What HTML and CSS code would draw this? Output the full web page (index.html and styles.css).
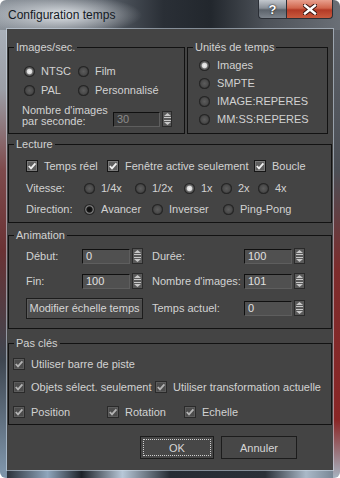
FILE: index.html
```html
<!DOCTYPE html>
<html lang="fr">
<head>
    <meta charset="UTF-8">
    <title>Configuration temps</title>
    <link rel="stylesheet" href="styles.css">
</head>
<body>

<div class="window">
    <div class="titlebar">
        <span class="title">Configuration temps</span>
        <div class="caption-btns">
            <span class="cap-btn help">?</span>
            <span class="cap-btn close">
                <svg width="14" height="11" viewBox="0 0 14 11">
                    <path d="M2 1.5 L12 9.5 M12 1.5 L2 9.5" stroke="#3a1510" stroke-width="4.4" stroke-linecap="square"/>
                    <path d="M2 1.5 L12 9.5 M12 1.5 L2 9.5" stroke="#ffffff" stroke-width="2.4" stroke-linecap="square"/>
                </svg>
            </span>
        </div>
    </div>

    <div class="client">
        <div class="top-row">
            <fieldset class="group fps">
                <legend>Images/sec.</legend>
                <div class="fps-body">
                    <div class="radio-grid">
                        <label class="opt"><span class="radio on"></span>NTSC</label>
                        <label class="opt"><span class="radio"></span>Film</label>
                        <label class="opt"><span class="radio"></span>PAL</label>
                        <label class="opt"><span class="radio"></span>Personnalisé</label>
                    </div>
                    <div class="fps-row">
                        <span class="fps-label">Nombre d'images<br>par seconde:</span>
                        <span class="field off">30</span>
                        <span class="spin">
                            <span class="arr"><svg width="7" height="5" viewBox="0 0 7 5"><path d="M3.5 0 L7 3 L0 3 Z" fill="#c8c8c8"/><rect x="0" y="4" width="7" height="1" fill="#c8c8c8"/></svg></span>
                            <span class="arr"><svg width="7" height="5" viewBox="0 0 7 5"><rect x="0" y="0" width="7" height="1" fill="#c8c8c8"/><path d="M0 2 L7 2 L3.5 5 Z" fill="#c8c8c8"/></svg></span>
                        </span>
                    </div>
                </div>
            </fieldset>

            <fieldset class="group units">
                <legend>Unités de temps</legend>
                <div class="units-body">
                    <label class="opt"><span class="radio on"></span>Images</label>
                    <label class="opt"><span class="radio"></span>SMPTE</label>
                    <label class="opt"><span class="radio"></span>IMAGE:REPERES</label>
                    <label class="opt"><span class="radio"></span>MM:SS:REPERES</label>
                </div>
            </fieldset>
        </div>

        <fieldset class="group playback">
            <legend>Lecture</legend>
            <div class="playback-body">
                <div class="row">
                    <label class="opt w81"><span class="cb"><svg width="10" height="10" viewBox="0 0 10 10"><path d="M1.8 5 L4 7.4 L8.4 2.4" fill="none" stroke="#f2f2f2" stroke-width="1.8"/></svg></span>Temps réel</label>
                    <label class="opt w147"><span class="cb"><svg width="10" height="10" viewBox="0 0 10 10"><path d="M1.8 5 L4 7.4 L8.4 2.4" fill="none" stroke="#f2f2f2" stroke-width="1.8"/></svg></span>Fenêtre active seulement</label>
                    <label class="opt"><span class="cb"><svg width="10" height="10" viewBox="0 0 10 10"><path d="M1.8 5 L4 7.4 L8.4 2.4" fill="none" stroke="#f2f2f2" stroke-width="1.8"/></svg></span>Boucle</label>
                </div>
                <div class="row speed">
                    <span class="row-label">Vitesse:</span>
                    <label class="opt w51"><span class="radio"></span>1/4x</label>
                    <label class="opt w49"><span class="radio"></span>1/2x</label>
                    <label class="opt w37"><span class="radio on"></span>1x</label>
                    <label class="opt w37"><span class="radio"></span>2x</label>
                    <label class="opt"><span class="radio"></span>4x</label>
                </div>
                <div class="row direction">
                    <span class="row-label">Direction:</span>
                    <label class="opt w68"><span class="radio dark"></span>Avancer</label>
                    <label class="opt w71"><span class="radio"></span>Inverser</label>
                    <label class="opt"><span class="radio"></span>Ping-Pong</label>
                </div>
            </div>
        </fieldset>

        <fieldset class="group animation">
            <legend>Animation</legend>
            <div class="anim-body">
                <div class="anim-row">
                    <span class="lbl1">Début:</span>
                    <span class="field">0</span>
                    <span class="spin">
                        <span class="arr"><svg width="7" height="5" viewBox="0 0 7 5"><path d="M3.5 0 L7 3 L0 3 Z" fill="#c8c8c8"/><rect x="0" y="4" width="7" height="1" fill="#c8c8c8"/></svg></span>
                        <span class="arr"><svg width="7" height="5" viewBox="0 0 7 5"><rect x="0" y="0" width="7" height="1" fill="#c8c8c8"/><path d="M0 2 L7 2 L3.5 5 Z" fill="#c8c8c8"/></svg></span>
                    </span>
                    <span class="lbl2">Durée:</span>
                    <span class="field">100</span>
                    <span class="spin">
                        <span class="arr"><svg width="7" height="5" viewBox="0 0 7 5"><path d="M3.5 0 L7 3 L0 3 Z" fill="#c8c8c8"/><rect x="0" y="4" width="7" height="1" fill="#c8c8c8"/></svg></span>
                        <span class="arr"><svg width="7" height="5" viewBox="0 0 7 5"><rect x="0" y="0" width="7" height="1" fill="#c8c8c8"/><path d="M0 2 L7 2 L3.5 5 Z" fill="#c8c8c8"/></svg></span>
                    </span>
                </div>
                <div class="anim-row second">
                    <span class="lbl1">Fin:</span>
                    <span class="field">100</span>
                    <span class="spin">
                        <span class="arr"><svg width="7" height="5" viewBox="0 0 7 5"><path d="M3.5 0 L7 3 L0 3 Z" fill="#c8c8c8"/><rect x="0" y="4" width="7" height="1" fill="#c8c8c8"/></svg></span>
                        <span class="arr"><svg width="7" height="5" viewBox="0 0 7 5"><rect x="0" y="0" width="7" height="1" fill="#c8c8c8"/><path d="M0 2 L7 2 L3.5 5 Z" fill="#c8c8c8"/></svg></span>
                    </span>
                    <span class="lbl2">Nombre d'images:</span>
                    <span class="field">101</span>
                    <span class="spin">
                        <span class="arr"><svg width="7" height="5" viewBox="0 0 7 5"><path d="M3.5 0 L7 3 L0 3 Z" fill="#c8c8c8"/><rect x="0" y="4" width="7" height="1" fill="#c8c8c8"/></svg></span>
                        <span class="arr"><svg width="7" height="5" viewBox="0 0 7 5"><rect x="0" y="0" width="7" height="1" fill="#c8c8c8"/><path d="M0 2 L7 2 L3.5 5 Z" fill="#c8c8c8"/></svg></span>
                    </span>
                </div>
                <div class="anim-row third">
                    <button class="btn scale-btn">Modifier échelle temps</button>
                    <span class="lbl2">Temps actuel:</span>
                    <span class="field">0</span>
                    <span class="spin">
                        <span class="arr"><svg width="7" height="5" viewBox="0 0 7 5"><path d="M3.5 0 L7 3 L0 3 Z" fill="#c8c8c8"/><rect x="0" y="4" width="7" height="1" fill="#c8c8c8"/></svg></span>
                        <span class="arr"><svg width="7" height="5" viewBox="0 0 7 5"><rect x="0" y="0" width="7" height="1" fill="#c8c8c8"/><path d="M0 2 L7 2 L3.5 5 Z" fill="#c8c8c8"/></svg></span>
                    </span>
                </div>
            </div>
        </fieldset>

        <fieldset class="group keys">
            <legend>Pas clés</legend>
            <div class="keys-body">
                <div class="row">
                    <label class="opt"><span class="cb dim"><svg width="10" height="10" viewBox="0 0 10 10"><path d="M1.8 5 L4 7.4 L8.4 2.4" fill="none" stroke="#b4b4b4" stroke-width="1.8"/></svg></span>Utiliser barre de piste</label>
                </div>
                <div class="row keys2">
                    <label class="opt w142"><span class="cb dim"><svg width="10" height="10" viewBox="0 0 10 10"><path d="M1.8 5 L4 7.4 L8.4 2.4" fill="none" stroke="#b4b4b4" stroke-width="1.8"/></svg></span>Objets sélect. seulement</label>
                    <label class="opt"><span class="cb dim"><svg width="10" height="10" viewBox="0 0 10 10"><path d="M1.8 5 L4 7.4 L8.4 2.4" fill="none" stroke="#b4b4b4" stroke-width="1.8"/></svg></span>Utiliser transformation actuelle</label>
                </div>
                <div class="row keys3">
                    <label class="opt w94"><span class="cb dim"><svg width="10" height="10" viewBox="0 0 10 10"><path d="M1.8 5 L4 7.4 L8.4 2.4" fill="none" stroke="#b4b4b4" stroke-width="1.8"/></svg></span>Position</label>
                    <label class="opt w77"><span class="cb dim"><svg width="10" height="10" viewBox="0 0 10 10"><path d="M1.8 5 L4 7.4 L8.4 2.4" fill="none" stroke="#b4b4b4" stroke-width="1.8"/></svg></span>Rotation</label>
                    <label class="opt"><span class="cb dim"><svg width="10" height="10" viewBox="0 0 10 10"><path d="M1.8 5 L4 7.4 L8.4 2.4" fill="none" stroke="#b4b4b4" stroke-width="1.8"/></svg></span>Echelle</label>
                </div>
            </div>
        </fieldset>

        <div class="actions">
            <button class="btn dlg-btn ok"><span class="focus">OK</span></button>
            <button class="btn dlg-btn">Annuler</button>
        </div>
    </div>
</div>

</body>
</html>
```

FILE: styles.css
```css
* {
    box-sizing: border-box;
}

body {
    margin: 0;
    background-color: #ffffff;
    font-family: "Liberation Sans", Arial, sans-serif;
    font-size: 11px;
}

.window {
    width: 340px;
    height: 478px;
    border-radius: 6px;
    overflow: hidden;
    display: flex;
    flex-direction: column;
    background:
        radial-gradient(ellipse 80px 20px at 62px 15px, rgba(230, 234, 238, 0.95), rgba(230, 234, 238, 0) 100%),
        linear-gradient(to right, #8c939b 0, #5a616a 30%, #2a2f36 48%, #22272d 62%, #4d5259 78%, #6a6f76 100%) top / 100% 30px no-repeat,
        linear-gradient(to bottom, #a9b0b9 30px, #9b9ea6 90px, #7e4a4c 170px, #6a3234 250px, #3e4650 360px, #7d93a8 470px) left / 7px 100% no-repeat,
        linear-gradient(to bottom, #5d6168 30px, #4b4f56 170px, #7d2c2c 270px, #8a2626 420px, #a6b3c0 478px) right / 7px 100% no-repeat,
        linear-gradient(to right, #1a1e24 0, #8fa6bc 14%, #1d2229 24%, #b8c8d8 36%, #262c34 50%, #2a3038 78%, #aab9c8 90%, #6c7a88 100%) bottom / 100% 8px no-repeat,
        #3a3f46;
}

.titlebar {
    height: 29px;
    display: flex;
    justify-content: space-between;
    align-items: flex-start;
    padding: 0 7px 0 8px;
}

.title {
    margin-top: 8px;
    font-family: "Liberation Sans", Arial, sans-serif;
    font-size: 12px;
    color: #141a24;
}

.caption-btns {
    display: flex;
}

.cap-btn {
    height: 19px;
    display: flex;
    align-items: center;
    justify-content: center;
    border: 1px solid #2b2f36;
    border-top: none;
}

.help {
    width: 28px;
    border-radius: 0 0 0 4px;
    border-right: none;
    background: linear-gradient(to bottom, #c3c8ce 0, #8a9098 45%, #5c636b 55%, #7d848c 100%);
    color: #ffffff;
    font-weight: bold;
    font-size: 13px;
    text-shadow: 0 0 2px #222, 0 0 1px #222;
}

.close {
    width: 47px;
    border-radius: 0 0 4px 0;
    background: linear-gradient(to bottom, #e8a08e 0, #d0654c 45%, #b33a26 55%, #c95a3e 100%);
}

.client {
    height: 441px;
    margin: 0 7px 8px 7px;
    background-color: #444444;
    padding: 0 1px;
    color: #d2d2d2;
    box-shadow: 0 0 0 1px rgba(210, 222, 235, 0.55);
}

.group {
    margin: 0;
    padding: 0;
    border: 1px solid #121212;
    min-width: 0;
}

.group legend {
    margin-left: 5px;
    padding: 0 2px;
    line-height: 13px;
    color: #d2d2d2;
}

.top-row {
    display: flex;
    margin-top: 12px;
}

.fps {
    width: 177px;
    height: 93px;
}

.units {
    width: 141px;
    height: 93px;
    margin-left: 2px;
}

.opt {
    display: flex;
    align-items: center;
    gap: 6px;
    height: 14px;
    white-space: nowrap;
}

.radio {
    width: 11px;
    height: 11px;
    border-radius: 50%;
    flex-shrink: 0;
    background: radial-gradient(circle at 50% 50%, #5c5c5c 0, #4a4a4a 45%, #2c2c2c 70%, #222 100%);
    box-shadow: inset 0 0 0 1px #262626;
}

.radio.on {
    background: radial-gradient(circle at 50% 50%, #f4f4f4 0, #d8d8d8 30%, #6a6a6a 42%, #3a3a3a 70%, #222 100%);
}

.radio.dark {
    background: radial-gradient(circle at 50% 50%, #0c0c0c 0, #151515 34%, #7a7a7a 46%, #3a3a3a 75%, #222 100%);
}

.cb {
    width: 12px;
    height: 12px;
    flex-shrink: 0;
    display: flex;
    align-items: center;
    justify-content: center;
    border: 1px solid #161616;
    background-color: #5e5e5e;
    box-shadow: inset 0 0 0 1px #7a7a7a;
}

.cb.dim {
    background-color: #4c4c4c;
    box-shadow: inset 0 0 0 1px #5c5c5c;
    border-color: #2a2a2a;
}

.fps-body {
    padding: 10px 0 0 15px;
}

.radio-grid {
    display: grid;
    grid-template-columns: 54px auto;
    row-gap: 5px;
}

.fps-row {
    display: flex;
    align-items: flex-end;
    margin: 8px 0 0 -2px;
}

.fps-label {
    width: 91px;
    line-height: 11px;
}

.field {
    width: 48px;
    height: 15px;
    padding: 0 0 0 3px;
    line-height: 13px;
    color: #e0e0e0;
    background-color: #505050;
    border: 1px solid #101010;
    border-right-color: #5e5e5e;
    border-bottom-color: #5e5e5e;
}

.field.off {
    width: 47px;
    color: #8c8c8c;
    background-color: #3d3d3d;
}

.spin {
    width: 11px;
    height: 16px;
    margin-left: 2px;
    display: flex;
    flex-direction: column;
    background-color: #595959;
    border: 1px solid #2a2a2a;
}

.arr {
    flex: 1;
    display: flex;
    align-items: center;
    justify-content: center;
}

.fps-row .spin {
    width: 10px;
    margin-left: 2px;
}

.units-body {
    padding: 4px 0 0 11px;
    display: flex;
    flex-direction: column;
    gap: 4px;
}

.units-body .opt {
    gap: 7px;
}

.playback {
    height: 85px;
    margin-top: 4px;
}

.playback-body {
    padding: 8px 0 0 17px;
}

.row {
    display: flex;
    align-items: center;
    height: 14px;
}

.row-label {
    width: 58px;
}

.speed {
    margin-top: 8px;
}

.direction {
    margin-top: 7px;
}

.w37 { width: 37px; }
.w49 { width: 49px; }
.w51 { width: 51px; }
.w68 { width: 68px; }
.w71 { width: 71px; }
.w77 { width: 77px; }
.w81 { width: 81px; }
.w94 { width: 94px; }
.w142 { width: 142px; }
.w147 { width: 147px; }

.animation {
    height: 100px;
    margin-top: 6px;
}

.anim-body {
    padding: 6px 0 0 17px;
}

.anim-row {
    display: flex;
    align-items: center;
    height: 16px;
}

.anim-row.second {
    margin-top: 9px;
}

.anim-row.third {
    margin-top: 8px;
    height: 22px;
}

.lbl1 {
    width: 56px;
}

.lbl2 {
    width: 92px;
    margin-left: 9px;
}

.btn {
    font-family: "Liberation Sans", Arial, sans-serif;
    font-size: 11px;
    color: #d6d6d6;
    padding: 0;
    border: 1px solid #1c1c1c;
    background-color: #4d4d4d;
    box-shadow: inset 1px 1px 0 #5c5c5c;
}

.scale-btn {
    width: 117px;
    height: 21px;
}

.keys {
    height: 88px;
    margin-top: 8px;
}

.keys-body {
    padding: 7px 0 0 4px;
}

.keys2 {
    margin-top: 9px;
}

.keys3 {
    margin-top: 11px;
}

.actions {
    display: flex;
    gap: 7px;
    margin: 11px 0 0 132px;
}

.dlg-btn {
    width: 76px;
    height: 23px;
    background-color: #474747;
    box-shadow: none;
}

.ok {
    width: 74px;
    padding: 2px;
}

.focus {
    display: flex;
    align-items: center;
    justify-content: center;
    height: 100%;
    border: 1px dotted #cfcfcf;
}
```
